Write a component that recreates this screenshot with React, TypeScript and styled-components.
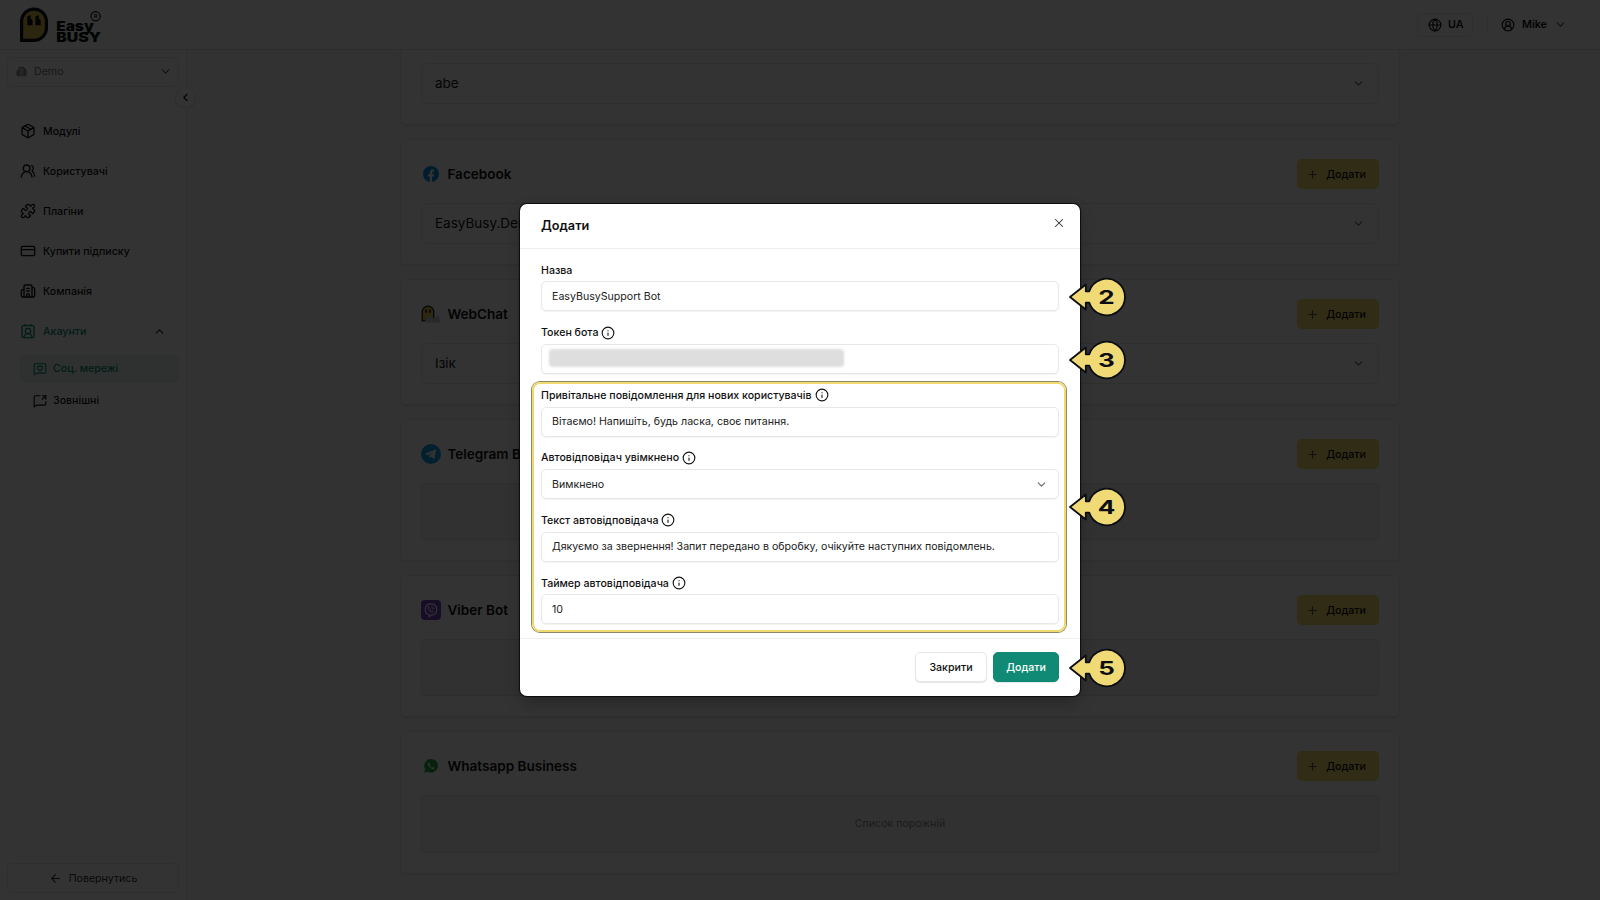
import React from 'react';
import styled, { createGlobalStyle, css } from 'styled-components';
import {
  ArrowLeft,
  Building2,
  ChevronDown,
  ChevronLeft,
  ChevronUp,
  CircleUserRound,
  ContactRound,
  CreditCard,
  Globe,
  Info,
  MessageSquareHeart,
  MessageSquareShare,
  Package,
  Plus,
  Puzzle,
  UsersRound,
  X,
} from 'lucide-react';

const Global = createGlobalStyle`
  *, *::before, *::after { box-sizing: border-box; }
  body {
    margin: 0;
    overflow: hidden;
    background: #fafafa;
    color: #111;
    font-family: Inter, "Noto Sans", sans-serif;
    font-size: 10.62px;
  }
  button { font: inherit; color: inherit; }
  svg { display: block; flex: none; }
`;

/* ---------- page ---------- */

const Page = styled.div`
  position: relative;
  display: flex;
  flex-direction: column;
  width: 1600px;
  height: 900px;
  overflow: hidden;
`;

const Header = styled.header`
  display: flex;
  align-items: center;
  flex: none;
  height: 50px;
  padding: 0 33px 0 19px;
  background: #fff;
  border-bottom: 1px solid #e2e3e4;
`;

const HeaderRight = styled.div`
  display: flex;
  align-items: center;
  margin-left: auto;
  font-size: 10.8px;
  font-weight: 600;
`;

const LangButton = styled.button`
  display: flex;
  align-items: center;
  gap: 6px;
  width: 56px;
  height: 24px;
  padding: 0 0 0 10px;
  background: #fff;
  border: 1px solid #e8e8ea;
  border-radius: 5px;
`;

const Divider = styled.span`
  width: 1px;
  height: 19px;
  margin: 0 13px 0 14px;
  background: #e8e8ea;
`;

const UserMenu = styled.div`
  display: flex;
  align-items: center;
  gap: 7px;
  height: 24px;

  svg:last-child { color: #555; }
`;

const Body = styled.div`
  display: flex;
  flex: 1;
  min-height: 0;
`;

const Sidebar = styled.aside`
  position: relative;
  display: flex;
  flex-direction: column;
  flex: none;
  width: 187px;
  padding: 7px 7px 7px;
  background: #fff;
  border-right: 1px solid #e8e8ea;
`;

const boxed = css`
  display: flex;
  align-items: center;
  height: 30px;
  background: #fff;
  border: 1px solid #e9e9eb;
  border-radius: 5px;
`;

const CompanySelect = styled.div`
  ${boxed}
  gap: 7px;
  width: 172px;
  padding: 0 6px 2px 8px;
  color: #777;

  svg:last-child { margin-left: auto; color: #555; }
`;

const Collapse = styled.button`
  position: absolute;
  top: 37px;
  right: -10px;
  z-index: 1;
  display: grid;
  place-items: center;
  width: 21px;
  height: 21px;
  padding: 0;
  background: #fff;
  border: 1px solid #e6e6e8;
  border-radius: 50%;
  box-shadow: 0 1px 2px rgba(0, 0, 0, 0.1);
`;

const Nav = styled.nav`
  display: flex;
  flex-direction: column;
  margin-top: 24.4px;
  font-weight: 500;
`;

const NavItem = styled.a<{ $active?: boolean }>`
  display: flex;
  align-items: center;
  gap: 7px;
  height: 40px;
  padding: 0 13px;
  color: ${(p) => (p.$active ? '#0e8a72' : '#111')};

  svg:nth-of-type(2) { margin-left: auto; color: #222; }
`;

const SubItem = styled.a<{ $active?: boolean }>`
  display: flex;
  align-items: center;
  gap: 6px;
  width: 159px;
  height: 28px;
  margin: 3.2px 0 1.2px 13px;
  padding-left: 13px;
  border-radius: 5px;
  color: ${(p) => (p.$active ? '#0e8a72' : '#111')};
  background: ${(p) => (p.$active ? '#e7f3f1' : 'transparent')};
`;

const BackButton = styled.button`
  ${boxed}
  justify-content: center;
  gap: 7px;
  width: 172px;
  margin-top: auto;
  padding: 0;
  color: #333;
`;

/* ---------- cards ---------- */

const Content = styled.main`
  display: flex;
  flex-direction: column;
  gap: 14px;
  flex: 1;
  min-width: 0;
  padding-left: 213px;
`;

const Card = styled.section<{ $cut?: boolean }>`
  display: flex;
  flex-direction: column;
  gap: 14px;
  flex: none;
  width: 1000px;
  padding: ${(p) => (p.$cut ? '13px' : '19px')} 20px 20px;
  background: #fff;
  border: 1px solid #ececee;
  border-top-width: ${(p) => (p.$cut ? 0 : 1)}px;
  border-radius: ${(p) => (p.$cut ? '0 0 6px 6px' : '6px')};
  box-shadow: 0 1px 2px rgba(0, 0, 0, 0.08);
`;

const CardHead = styled.div`
  display: flex;
  align-items: center;
  height: 30px;
`;

const Brand = styled.span`
  display: flex;
  align-items: center;
  justify-content: center;
  width: 20px;
  margin-right: 6.4px;
`;

const CardTitle = styled.h2`
  margin: 0;
  font-size: 13.55px;
  font-weight: 600;
`;

const AddButton = styled.button`
  display: flex;
  align-items: center;
  justify-content: center;
  gap: 7px;
  width: 82px;
  height: 30px;
  margin-left: auto;
  padding: 0 4px 0 0;
  border: 0;
  border-radius: 5px;
  background: #f1d96b;
  font-weight: 500;

  svg { color: #555; }
`;

const Account = styled.div`
  display: flex;
  align-items: center;
  justify-content: space-between;
  height: 41px;
  padding: 0 13px 1px 13px;
  border: 1px solid #e9e9eb;
  border-radius: 6px;
  font-size: 13.5px;

  svg { color: #666; }
`;

const Empty = styled.div`
  display: grid;
  place-items: center;
  height: 57.2px;
  border: 1px solid #e6e6e8;
  border-radius: 5px;
  background: #f5f5f6;
  color: #8a8a8a;
`;

/* ---------- modal ---------- */

const Overlay = styled.div`
  position: absolute;
  inset: 0;
  z-index: 5;
  display: flex;
  align-items: flex-start;
  justify-content: center;
  padding-top: 204px;
  background: rgba(0, 0, 0, 0.8);
`;

const Dialog = styled.div`
  position: relative;
  display: flex;
  flex-direction: column;
  width: 560px;
  height: 492px;
  background: #fff;
  border-radius: 7px;
  box-shadow: 0 0 1px 1px rgba(0, 0, 0, 0.75), 0 8px 16px rgba(0, 0, 0, 0.22);
`;

const DialogHead = styled.div`
  display: flex;
  align-items: center;
  justify-content: space-between;
  height: 45px;
  padding: 0 14px 0 21px;
  border-bottom: 1px solid #eeeeef;
`;

const DialogTitle = styled.h1`
  margin: -1px 0 0;
  font-size: 12.7px;
  font-weight: 600;
`;

const CloseButton = styled.button`
  display: grid;
  margin-top: -7px;
  padding: 0;
  border: 0;
  background: none;
  color: #333;
`;

const Form = styled.div`
  display: flex;
  flex-direction: column;
  gap: 12.6px;
  height: 389px;
  padding: 12.4px 21px 0;
`;

const Field = styled.div`
  display: flex;
  flex-direction: column;
  gap: 4px;
`;

const Label = styled.label`
  display: flex;
  align-items: center;
  gap: 3px;
  height: 16px;
  padding-top: 1.4px;
  font-weight: 500;
`;

const Input = styled.div`
  display: flex;
  align-items: center;
  justify-content: space-between;
  height: 30px;
  padding: 0 10px 0 10px;
  border: 1px solid #e7e7e8;
  border-radius: 5px;
  box-shadow: 0 1px 1px rgba(0, 0, 0, 0.05);
  color: #222;

  svg { color: #666; }
`;

const Redacted = styled.span`
  width: 295px;
  height: 18px;
  margin: -1px 0 0 -3px;
  border-radius: 4px;
  background: #dedede;
  filter: blur(1.2px);
`;

const Highlighted = styled.div`
  position: relative;
  display: flex;
  flex-direction: column;
  gap: 12.6px;

  &::after {
    content: '';
    position: absolute;
    inset: -5px -7px -7.4px -9px;
    border: 2.5px solid #f0da70;
    border-radius: 8px;
    box-shadow: 0 0 0 1px #8d8869;
    pointer-events: none;
  }
`;

const DialogFoot = styled.div`
  display: flex;
  justify-content: flex-end;
  gap: 6px;
  padding: 13px 21px 0;
  border-top: 1px solid #eeeeef;
`;

const FootButton = styled.button<{ $primary?: boolean }>`
  width: ${(p) => (p.$primary ? 66 : 72)}px;
  height: 30px;
  padding: 0;
  border: 1px solid ${(p) => (p.$primary ? '#108a74' : '#e6e6e7')};
  border-radius: 5px;
  background: ${(p) => (p.$primary ? '#108a74' : '#fff')};
  color: ${(p) => (p.$primary ? '#fff' : '#111')};
  box-shadow: 0 1px 1px rgba(0, 0, 0, 0.1);
  font-weight: 500;
`;

const Pin = styled.div<{ $y: number }>`
  position: absolute;
  left: 547px;
  top: ${(p) => p.$y - 22}px;
`;

/* ---------- drawings ---------- */

const Logo = () => (
  <svg width="84" height="42" viewBox="0 -3 84 42">
    <path
      d="M2.6 33.4V14.5A12.4 12.4 0 0 1 27.4 14.5V20.8A12.4 12.4 0 0 1 15 33.4Z"
      fill="#d9bd55"
      stroke="#0c1512"
      strokeWidth="3.2"
    />
    <path
      d="M8.2 9.5l3.4-1.6v3.6l1.9 1.6v5.2H8.2zM16.4 9.5l3.4-1.6v3.6l1.9 1.6v5.2h-5.3z"
      fill="#0c1512"
    />
    <g fill="#0c1512" fontFamily="Inter, sans-serif" fontWeight="900" fontSize="13">
      <text x="37.2" y="24.2" textLength="37.5" lengthAdjust="spacingAndGlyphs">Easy</text>
      <text x="37.2" y="34.7" textLength="44.8" lengthAdjust="spacingAndGlyphs">BUSY</text>
      <text x="76.6" y="11" fontSize="5.2" fontWeight="700" textAnchor="middle">R</text>
    </g>
    <circle cx="76.6" cy="9.2" r="4.6" fill="none" stroke="#0c1512" strokeWidth="1.2" />
  </svg>
);

const FacebookMark = () => (
  <svg width="16" height="16" viewBox="0 0 16 16">
    <circle cx="8" cy="8" r="8" fill="#0792df" />
    <path
      d="M6.8 16v-5.4H4.9V8.3h1.9V6.6c0-2 1.1-3 2.8-3 .8 0 1.5.1 1.5.1v1.9h-.9c-.9 0-1.2.6-1.2 1.2v1.5h2l-.3 2.3H9V16z"
      fill="#fff"
    />
  </svg>
);

const WebChatMark = () => (
  <svg width="20" height="18" viewBox="0 0 20 18">
    <path d="M1.2 15.8V7a5.8 5.8 0 0 1 11.6 0v8.8z" fill="#e3c14c" stroke="#222" strokeWidth="1.3" />
    <path d="M4.3 4.6h1.6v3.2H4.3zM8 4.6h1.6v3.2H8z" fill="#222" />
    <path d="M4 16.5l2.5-5h3l1.5 1.500h3.500l1.500-2.500h1.500l1 4 1 3H5z" fill="#c9ced8" />
  </svg>
);

const TelegramMark = () => (
  <svg width="20" height="20" viewBox="0 0 20 20">
    <circle cx="10" cy="10" r="10" fill="#0d9ee2" />
    <path d="M4 9.8l11.2-4.5-1.8 9.6-3.1-2.2-1.6 1.6-.3-2.6 4.3-3.9-5.4 3.4z" fill="#fff" />
  </svg>
);

const ViberMark = () => (
  <svg width="20" height="20" viewBox="0 0 20 20">
    <rect width="20" height="20" rx="4" fill="#7340c4" />
    <path
      d="M10 3.9c3.8 0 5.8 1.3 5.8 5.5s-2 5.5-5.2 5.5l-2.4 2v-2.3c-2.8-.4-4-2-4-5.2 0-4.2 2-5.5 5.8-5.5z"
      fill="none"
      stroke="#fff"
      strokeWidth="1.1"
    />
    <path
      d="M7.5 6.4c-.8.5-.9 1.1-.5 2.1.8 1.9 2 3.1 3.9 3.9.9.4 1.5.1 1.9-.7l-1.6-1.1-.8.6c-.9-.4-1.4-.9-1.8-1.8l.6-.8zM10.3 6.2c1.7.1 2.7 1.2 2.8 2.9M10.4 7.7c.8.1 1.2.5 1.2 1.3"
      fill="none"
      stroke="#fff"
      strokeWidth=".8"
    />
  </svg>
);

const WhatsappMark = () => (
  <svg width="14" height="14" viewBox="0 0 14 14">
    <path d="M7.1 0a6.8 6.8 0 1 1-3.3 12.7L.2 13.8l1-3.5A6.8 6.8 0 0 1 7.1 0z" fill="#22a83c" />
    <path
      d="M4.6 3.4c-.9.6-1 1.6-.5 2.7.9 2 2.2 3.3 4.2 4 1.1.3 2-.1 2.3-1.2l-1.7-1-.8.9c-1.2-.5-2-1.3-2.5-2.4l.7-.8z"
      fill="#fff"
    />
  </svg>
);

const PinArrow = ({ n }: { n: string }) => (
  <svg width="60" height="44" viewBox="0 0 60 44">
    <path
      d="M3 22L18.8 9.5V16.3H22.3A18.3 18.3 0 1 1 22.3 27.7H18.8V34.5Z"
      fill="#f0da75"
      stroke="#0b0d12"
      strokeWidth="1.8"
      strokeLinejoin="round"
    />
    <text
      transform="translate(39.5 28.8) scale(1.4 1)"
      textAnchor="middle"
      fontFamily="Inter, sans-serif"
      fontWeight="700"
      fontSize="18.6"
      fill="#0b0d12"
    >
      {n}
    </text>
  </svg>
);

/* ---------- composition ---------- */

const channels = [
  { title: 'Facebook', mark: <FacebookMark />, account: 'EasyBusy.Demo' },
  { title: 'WebChat', mark: <WebChatMark />, account: 'Ізік' },
  { title: 'Telegram Bot', mark: <TelegramMark /> },
  { title: 'Viber Bot', mark: <ViberMark /> },
  { title: 'Whatsapp Business', mark: <WhatsappMark /> },
];

const AccountRow = ({ name }: { name: string }) => (
  <Account>
    {name}
    <ChevronDown size={13} />
  </Account>
);

const FormField = ({
  label,
  info,
  children,
}: {
  label: string;
  info?: boolean;
  children: React.ReactNode;
}) => (
  <Field>
    <Label>
      {label}
      {info && <Info size={14} strokeWidth={1.9} />}
    </Label>
    <Input>{children}</Input>
  </Field>
);

export default function App() {
  return (
    <>
      <Global />
      <Page>
        <Header>
          <Logo />
          <HeaderRight>
            <LangButton>
              <Globe size={14} />
              UA
            </LangButton>
            <Divider />
            <UserMenu>
              <CircleUserRound size={14} />
              Mike
              <ChevronDown size={13} />
            </UserMenu>
          </HeaderRight>
        </Header>
        <Body>
          <Sidebar>
            <CompanySelect>
              <Building2 size={11} fill="#bbb" />
              Demo
              <ChevronDown size={13} />
            </CompanySelect>
            <Collapse>
              <ChevronLeft size={13} />
            </Collapse>
            <Nav>
              <NavItem><Package size={16} />Модулі</NavItem>
              <NavItem><UsersRound size={16} />Користувачі</NavItem>
              <NavItem><Puzzle size={16} />Плагіни</NavItem>
              <NavItem><CreditCard size={16} />Купити підписку</NavItem>
              <NavItem><Building2 size={16} />Компанія</NavItem>
              <NavItem $active><ContactRound size={16} />Акаунти<ChevronUp size={13} /></NavItem>
              <SubItem $active><MessageSquareHeart size={14} />Соц. мережі</SubItem>
              <SubItem><MessageSquareShare size={14} />Зовнішні</SubItem>
            </Nav>
            <BackButton>
              <ArrowLeft size={13} />
              Повернутись
            </BackButton>
          </Sidebar>
          <Content>
            <Card $cut>
              <AccountRow name="abe" />
            </Card>
            {channels.map((c) => (
              <Card key={c.title}>
                <CardHead>
                  <Brand>{c.mark}</Brand>
                  <CardTitle>{c.title}</CardTitle>
                  <AddButton>
                    <Plus size={13} />
                    Додати
                  </AddButton>
                </CardHead>
                {c.account ? <AccountRow name={c.account} /> : <Empty>Список порожній</Empty>}
              </Card>
            ))}
          </Content>
        </Body>
        <Overlay>
          <Dialog>
            <DialogHead>
              <DialogTitle>Додати</DialogTitle>
              <CloseButton>
                <X size={14} strokeWidth={1.8} />
              </CloseButton>
            </DialogHead>
            <Form>
              <FormField label="Назва">EasyBusySupport Bot</FormField>
              <FormField label="Токен бота" info>
                <Redacted />
              </FormField>
              <Highlighted>
                <FormField label="Привітальне повідомлення для нових користувачів" info>
                  Вітаємо! Напишіть, будь ласка, своє питання.
                </FormField>
                <FormField label="Автовідповідач увімкнено" info>
                  Вимкнено
                  <ChevronDown size={13} />
                </FormField>
                <FormField label="Текст автовідповідача" info>
                  Дякуємо за звернення! Запит передано в обробку, очікуйте наступних повідомлень.
                </FormField>
                <FormField label="Таймер автовідповідача" info>
                  10
                </FormField>
              </Highlighted>
            </Form>
            <DialogFoot>
              <FootButton>Закрити</FootButton>
              <FootButton $primary>Додати</FootButton>
            </DialogFoot>
            <Pin $y={93}><PinArrow n="2" /></Pin>
            <Pin $y={155.5}><PinArrow n="3" /></Pin>
            <Pin $y={303}><PinArrow n="4" /></Pin>
            <Pin $y={464}><PinArrow n="5" /></Pin>
          </Dialog>
        </Overlay>
      </Page>
    </>
  );
}
